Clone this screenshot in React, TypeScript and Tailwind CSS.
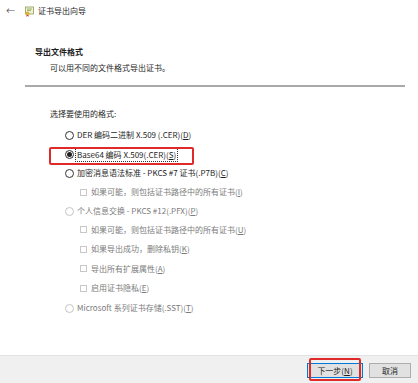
import React from "react";

type Row = {
  kind: "radio" | "check";
  label: string;
  key: string;
  tail?: string;
  h: string;
  checked?: boolean;
  disabled?: boolean;
  focus?: boolean;
};

const rows: Row[] = [
  { kind: "radio", label: "DER 编码二进制 X.509 (.CER)(", key: "D", tail: ")", h: "h-[20px]" },
  { kind: "radio", label: "Base64 编码 X.509(.CER)(", key: "S", tail: ")", h: "h-[19px]", checked: true, focus: true },
  { kind: "radio", label: "加密消息语法标准 - PKCS #7 证书(.P7B)(", key: "C", tail: ")", h: "h-[18px]" },
  { kind: "check", label: "如果可能，则包括证书路径中的所有证书(", key: "I", tail: ")", h: "h-[20px]", disabled: true },
  { kind: "radio", label: "个人信息交换 - PKCS #12(.PFX)(", key: "P", tail: ")", h: "h-[18px]", disabled: true },
  { kind: "check", label: "如果可能，则包括证书路径中的所有证书(", key: "U", tail: ")", h: "h-[19px]", disabled: true },
  { kind: "check", label: "如果导出成功，删除私钥(", key: "K", tail: ")", h: "h-[20px]", disabled: true },
  { kind: "check", label: "导出所有扩展属性(", key: "A", tail: ")", h: "h-[19px]", disabled: true },
  { kind: "check", label: "启用证书隐私(", key: "E", tail: ")", h: "h-[20px]", disabled: true },
  { kind: "radio", label: "Microsoft 系列证书存储(.SST)(", key: "T", tail: ")", h: "h-[20px]", disabled: true },
];

function CertIcon() {
  return (
    <svg width="11" height="11" viewBox="0 0 11 11">
      <rect x="1.5" y="1" width="8" height="7" fill="#f4f1d8" stroke="#8f9a55" strokeWidth="0.8" />
      <path d="M3 3h5M3 4.6h4" stroke="#7fa142" strokeWidth="0.8" />
      <circle cx="3.5" cy="7.5" r="2" fill="#d9b43a" />
      <path d="M2.7 9l-.5 1.8 1.3-.7 1.3.7-.5-1.8" fill="#c0392b" />
    </svg>
  );
}

function Radio({ checked, disabled }: { checked?: boolean; disabled?: boolean }) {
  return (
    <span
      className={`w-[9px] h-[9px] rounded-full border flex items-center justify-center bg-white shrink-0 ${
        disabled ? "border-[#c4c4c4]" : "border-[#333333]"
      }`}
    >
      {checked && <span className="w-[5px] h-[5px] rounded-full bg-[#222222]" />}
    </span>
  );
}

export default function App() {
  return (
    <div className="w-[418px] h-[383px] bg-white flex flex-col overflow-hidden font-['Noto_Sans_CJK_SC','Microsoft_YaHei',sans-serif] text-[8px] leading-[12px] text-[#1e1e1e]">
      {/* title bar */}
      <div className="h-[22px] flex items-center pl-[6px]">
        <span className="text-[#555555] text-[9px] w-[18px]">←</span>
        <CertIcon />
        <span className="ml-[3px] text-[8px]">证书导出向导</span>
      </div>

      {/* header */}
      <div className="mt-[24px] pl-[35px] font-bold">导出文件格式</div>
      <div className="mt-[4px] pl-[50px]">可以用不同的文件格式导出证书。</div>
      <div className="mt-[11px] ml-[25px] w-[380px] h-[2px] bg-[#a9a9a9]" />

      {/* body */}
      <div className="mt-[21px] pl-[50px]">选择要使用的格式:</div>
      <div className="mt-[5px] flex flex-col pl-[65px]">
        {rows.map((r, i) => (
          <div
            key={i}
            className={`relative flex items-center ${r.h} ${r.kind === "check" ? "pl-[15px]" : ""} ${
              r.disabled ? "text-[#7b7b7b]" : ""
            }`}
          >
            {r.kind === "radio" ? (
              <Radio checked={r.checked} disabled={r.disabled} />
            ) : (
              <span className="w-[7px] h-[7px] border border-[#c8c8c8] bg-white shrink-0" />
            )}
            <span
              className={`${r.kind === "radio" ? "ml-[2px]" : "ml-[3px]"} px-[1px] ${
                r.focus ? "outline outline-1 outline-dotted outline-[#333333]" : ""
              }`}
            >
              {r.label}
              <span className="underline">{r.key}</span>
              {r.tail}
            </span>
            {r.focus && (
              <span className="absolute left-[-16px] top-[2px] w-[145px] h-[18px] border-2 border-[#e02a2a] rounded-[2px]" />
            )}
          </div>
        ))}
      </div>

      <div className="flex-1" />

      {/* footer */}
      <div className="h-[28px] bg-[#f0f0f0] border-t border-[#e2e2e2] flex justify-end items-start pt-[7px] pr-[7px] gap-[6px]">
        <button className="relative w-[56px] h-[15px] bg-[#e1e1e1] border border-[#0078d7] flex items-center justify-center text-[8px] leading-none">
          下一步(<span className="underline">N</span>)
          <span className="absolute left-[1px] top-[-6px] w-[52px] h-[23px] border-2 border-[#e02a2a] rounded-[2px]" />
        </button>
        <button className="w-[42px] h-[15px] bg-[#e1e1e1] border border-[#adadad] flex items-center justify-center text-[8px] leading-none">
          取消
        </button>
      </div>
    </div>
  );
}
